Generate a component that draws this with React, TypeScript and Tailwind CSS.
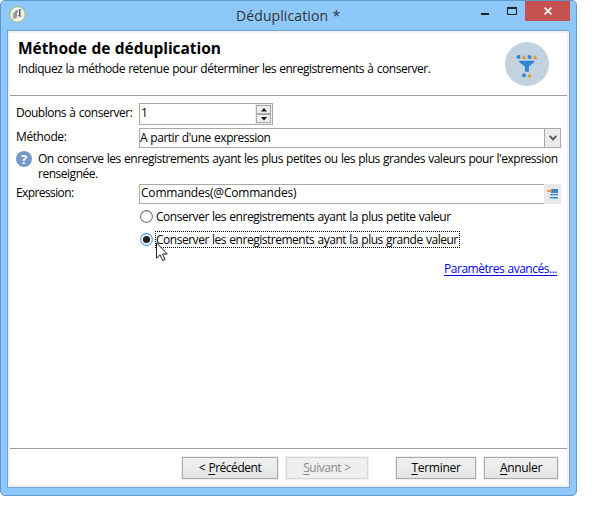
import type { ReactNode } from "react";

function AppLogo() {
  return (
    <svg width="17" height="17" viewBox="0 0 17 17" className="block">
      <circle cx="8.5" cy="8.5" r="7.7" fill="#f1f1ee" stroke="#9bc455" strokeWidth="1" />
      <path d="M3.8 7.5 6 5.8v6.5L3.8 13z" fill="#a4a8a4" />
      <path d="M6 5.2 9 3.8v2L8 7v1.5L7.6 12l-1.6.8z" fill="#8d918e" />
      <path d="M10.8 3v7" stroke="#3b3e42" strokeWidth="1.2" />
      <path d="M9 9c.2 2 2.4 1.8 3.6.8" stroke="#6a6e70" strokeWidth=".8" fill="none" />
    </svg>
  );
}

function FunnelBadge() {
  return (
    <svg width="44" height="44" viewBox="0 0 44 44" className="block">
      <circle cx="22" cy="22" r="22" fill="#c2d3df" />
      <g fill="#3385d1">
        <circle cx="13.5" cy="15" r="2" />
        <circle cx="24.5" cy="15" r="2" />
        <circle cx="19" cy="33.3" r="2" />
        <path d="M14.3 18.7h15v1.6l-5.4 4.2v5.2h-4v-5.2l-5.6-4.2z" />
      </g>
      <g fill="#e8971a">
        <path d="M19 12.7l2.2 4.3h-4.4zM30 12.7l2.2 4.3h-4.4zM24.5 31l2.2 4.3h-4.4z" />
      </g>
    </svg>
  );
}

function Cursor() {
  return (
    <svg width="13" height="20" viewBox="0 0 13 20" className="absolute left-0 top-[10px]">
      <path
        d="M.5.8v15.4l3.6-3.4 2.5 5.7 2.4-1-2.5-5.5h4.8z"
        fill="#fff"
        stroke="#222"
        strokeWidth="1"
      />
    </svg>
  );
}

function Radio({ checked = false }: { checked?: boolean }) {
  return (
    <svg width="13" height="13" viewBox="0 0 13 13" className="block shrink-0">
      <circle cx="6.5" cy="6.5" r="5.9" fill="#fff" stroke={checked ? "#4a9df0" : "#777"} strokeWidth="1.1" />
      {checked && <circle cx="6.5" cy="6.5" r="3.6" fill="#222" />}
    </svg>
  );
}

function Button({ className, children, disabled = false }: { className: string; children: ReactNode; disabled?: boolean }) {
  return (
    <div
      className={`flex h-[22px] items-center justify-center border outline outline-[#f0f0f0] ${
        disabled ? "border-[#d8d8d8] bg-[#efefef] text-[#898989]" : "border-[#a9a9a9] bg-linear-to-b from-[#f0f0f0] to-[#e5e5e5]"
      } ${className}`}
    >
      <span className="whitespace-pre">{children}</span>
    </div>
  );
}

function Key({ children }: { children: ReactNode }) {
  return <span className="underline decoration-1 underline-offset-2">{children}</span>;
}

export default function App() {
  return (
    <div className="h-[508px] w-[598px] overflow-hidden bg-white font-['Open_Sans','Noto_Sans',sans-serif] text-[12px] leading-4 tracking-[-0.48px] [word-spacing:0.6px] whitespace-nowrap text-black">
      <div className="flex h-[496px] w-[577px] flex-col rounded-[5px] border border-[#6298ca] bg-[#8ec8fa] px-[6px] pb-[7px]">
        <header className="flex h-[29px] shrink-0 items-start">
          <div className="ml-[2px] mt-[5px] w-[17px] shrink-0"><AppLogo /></div>
          <div className="ml-[210px] mt-[5px] w-[106px] shrink-0 text-[14px] leading-5 tracking-[0.1px] text-[#333]">Déduplication *</div>
          <div className="ml-[139px] mt-[12px] h-[2px] w-2 shrink-0 bg-[#222]" />
          <div className="ml-[18px] mt-[6px] h-2 w-[10px] shrink-0 border border-t-2 border-[#222]" />
          <div className="ml-2 flex h-5 w-[45px] shrink-0 items-center justify-center bg-[#c75050]">
            <svg width="8" height="8" viewBox="0 0 8 8"><path d="M.6.6l6.8 6.8M7.4.6L.6 7.4" stroke="#fff" strokeWidth="1.7" /></svg>
          </div>
        </header>
        <main className="flex min-h-0 flex-1 flex-col border border-[#70a8dc] bg-white">
          <div className="flex min-h-0 flex-1 flex-col border-2 border-[#f0f0f0]">
            <div className="flex h-[63px] shrink-0 justify-between border-b border-[#9d9d9d] pl-2 pr-[18px]">
              <div className="pt-[5px]">
                <h1 className="text-[15.5px] leading-5 font-bold tracking-[-0.06px]">Méthode de déduplication</h1>
                <p className="mt-[3px]">Indiquez la méthode retenue pour déterminer les enregistrements à conserver.</p>
              </div>
              <div className="pt-[9px]"><FunnelBadge /></div>
            </div>
            <section className="flex min-h-0 flex-1 flex-col pl-[6px] pr-[6px] pt-[7px]">
              <div className="flex h-[25px]">
                <span className="w-[123px] shrink-0 pt-[2px]">Doublons à conserver:</span>
                <div className="flex h-[22px] w-[134px] justify-between border border-[#a9a9a9] pl-px">
                  <span className="pt-[1px] tracking-normal">1</span>
                  <div className="flex w-[17px] flex-col bg-[#eee] p-[1px]">
                    <div className="flex h-[9px] items-center justify-center border border-[#aaa] bg-[#eee]">
                      <svg width="6" height="4" viewBox="0 0 6 4"><path d="M3 0l3 3.5H0z" fill="#111" /></svg>
                    </div>
                    <div className="flex h-[9px] items-center justify-center border border-[#aaa] bg-[#eee]">
                      <svg width="6" height="4" viewBox="0 0 6 4"><path d="M0 0h6L3 3.5z" fill="#111" /></svg>
                    </div>
                  </div>
                </div>
              </div>
              <div className="flex h-[23px]">
                <span className="w-[123px] shrink-0 pt-[1px] tracking-[-0.4px]">Méthode:</span>
                <div className="flex h-5 w-[422px] shrink-0 justify-between border border-[#a9a9a9]">
                  <span className="pt-[1px]">A partir d'une expression</span>
                  <div className="flex w-4 items-center justify-center border-l border-[#a9a9a9] bg-[#eaeaea]">
                    <svg width="8" height="6" viewBox="0 0 8 6"><path d="M.7.8L4 4.4 7.3.8" fill="none" stroke="#555" strokeWidth="1.9" /></svg>
                  </div>
                </div>
              </div>
              <div className="flex h-[33px]">
                <div className="flex size-4 shrink-0 items-center justify-center rounded-full bg-[#7698c8] text-[13px] font-bold tracking-normal text-white">?</div>
                <p className="ml-[6px] leading-[15px]">
                  On conserve les enregistrements ayant les plus petites ou les plus grandes valeurs pour l'expression<br />renseignée.
                </p>
              </div>
              <div className="flex h-[26px]">
                <span className="w-[123px] shrink-0 pt-px tracking-[-0.6px]">Expression:</span>
                <div className="h-5 w-[405px] shrink-0 border border-r-0 border-[#a9a9a9] pl-px tracking-[-0.2px]">Commandes(@Commandes)</div>
                <div className="flex h-5 w-[17px] shrink-0 items-center justify-center bg-[#e9e9e9]">
                  <svg width="11" height="10" viewBox="0 0 11 10">
                    <path d="M4 0h7v4H4z" fill="#3687d3" /><path d="M3 5h8v1H3zM3 8h8v1.4H3z" fill="#3687d3" />
                    <path d="M3 6.3h8v.8H3z" fill="#a3c5e5" /><path d="M0 2h5M1.5.8v2.4M3.2.8v2.4" stroke="#ed9e22" strokeWidth="1.3" />
                  </svg>
                </div>
              </div>
              <div className="flex h-[21px] items-start pl-[124px]">
                <Radio />
                <span className="-mt-px ml-[3px]">Conserver les enregistrements ayant la plus petite valeur</span>
              </div>
              <div className="flex h-[26px] items-start pl-[124px]">
                <div className="pt-[2px]"><Radio checked /></div>
                <div className="relative ml-[2px] h-[17px] w-[305px] border border-dotted border-black">
                  <span className="block leading-[15px]">Conserver les enregistrements ayant la plus grande valeur</span>
                  <Cursor />
                </div>
              </div>
              <a className="mr-1 mt-1 self-end text-[#0000f0] underline underline-offset-2">Paramètres avancés...</a>
            </section>
            <footer className="flex h-[37px] shrink-0 items-start justify-end border-t border-[#9d9d9d] pr-[9px] pt-2">
              <Button className="w-[96px]">{"< "}<Key>P</Key>récédent</Button>
              <Button disabled className="ml-2 w-[82px]"><Key>S</Key>uivant &gt;</Button>
              <Button className="ml-7 w-20 tracking-[-0.3px]"><Key>T</Key>erminer</Button>
              <Button className="ml-2 w-[74px] tracking-[-0.3px]"><Key>A</Key>nnuler</Button>
            </footer>
          </div>
        </main>
      </div>
    </div>
  );
}
